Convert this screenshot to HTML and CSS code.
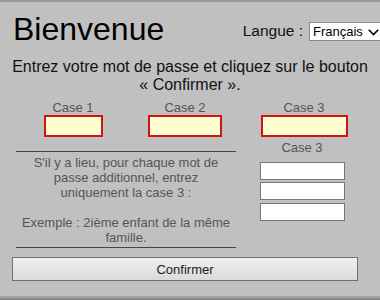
FILE: index.html
```html
<!DOCTYPE html>
<html lang="fr">
<head>
<meta charset="utf-8">
<title>Bienvenue</title>
<link rel="stylesheet" href="styles.css">
</head>
<body>
<div class="page">
  <header class="head">
    <h1 class="title">Bienvenue</h1>
    <div class="lang">
      <span class="lang-label">Langue :</span>
      <div class="select">
        <span class="select-text">Français</span>
        <svg class="chev" width="11" height="7" viewBox="0 0 11 7"><path d="M0.8 0.8 L5.5 5.6 L10.2 0.8" fill="none" stroke="#000" stroke-width="1.6"/></svg>
      </div>
    </div>
  </header>
  <p class="intro">Entrez votre mot de passe et cliquez sur le bouton<br>« Confirmer ».</p>
  <div class="cases">
    <div class="case"><span class="lbl">Case 1</span><span class="field req w1"></span></div>
    <div class="case"><span class="lbl">Case 2</span><span class="field req w2"></span></div>
    <div class="case"><span class="lbl">Case 3</span><span class="field req w3"></span></div>
  </div>
  <div class="extra">
    <div class="note">
      <p>S'il y a lieu, pour chaque mot de<br>passe additionnel, entrez<br>uniquement la case 3 :</p>
      <p class="ex">Exemple : 2ième enfant de la même<br>famille.</p>
    </div>
    <div class="more">
      <span class="lbl">Case 3</span>
      <span class="field plain first"></span>
      <span class="field plain second"></span>
      <span class="field plain third"></span>
    </div>
  </div>
  <button class="confirm" type="button">Confirmer</button>
</div>
<div class="bottom"></div>
</body>
</html>
```
FILE: styles.css
```css
html, body {
  margin: 0;
  padding: 0;
  overflow: hidden;
}
body {
  width: 380px;
  height: 300px;
  display: flex;
  flex-direction: column;
  background: #c0c0c0;
  font-family: "Liberation Sans", Arial, sans-serif;
}
.page {
  flex: 1;
  border-top: 2px solid #9a9a9a;
}
.head {
  display: flex;
  align-items: flex-start;
  padding: 9px 0 0 13px;
}
.title {
  margin: 0;
  font-size: 32px;
  line-height: 36px;
  font-weight: normal;
  color: #000;
}
.lang {
  margin-left: auto;
  margin-right: -4px;
  margin-top: 11px;
  display: flex;
  align-items: flex-start;
}
.lang-label {
  font-size: 15.5px;
  line-height: 17px;
  color: #111;
  margin-right: 6px;
}
.select {
  box-sizing: border-box;
  width: 75px;
  height: 19px;
  border: 1px solid #8a8a8a;
  background: #fff;
  display: flex;
  align-items: center;
  padding-left: 3px;
}
.select-text {
  font-size: 13px;
  color: #000;
  line-height: 15px;
}
.chev {
  margin-left: 5px;
  margin-top: 1px;
}
.intro {
  margin: 11px 0 0;
  font-size: 16px;
  line-height: 18px;
  text-align: center;
  color: #111;
}
.cases {
  display: grid;
  grid-template-columns: 114px 110px 128px;
  padding-left: 16px;
  margin-top: 6px;
}
.case {
  display: flex;
  flex-direction: column;
  align-items: center;
}
.lbl {
  font-size: 13px;
  line-height: 15px;
  color: #555;
}
.field {
  display: block;
  box-sizing: border-box;
}
.req {
  height: 22px;
  border: 2px solid #d01414;
  background: #ffffd2;
}
.w1 { width: 59px; }
.w2 { width: 74px; }
.w3 { width: 87px; }
.extra {
  display: grid;
  grid-template-columns: 220px 132px;
  padding-left: 16px;
  margin-top: 3px;
  align-items: start;
}
.note {
  margin-top: 11px;
  border-top: 1px solid #444;
  border-bottom: 1px solid #444;
  padding: 3px 0 2px;
  text-align: center;
  font-size: 13px;
  line-height: 15px;
  color: #555;
  white-space: nowrap;
}
.note p {
  margin: 0;
}
.note .ex {
  margin-top: 15px;
}
.more {
  display: flex;
  flex-direction: column;
  align-items: center;
}
.plain {
  width: 85px;
  height: 18px;
  border: 1px solid #777;
  background: #fff;
}
.first { margin-top: 7px; }
.second { margin-top: 2px; }
.third { margin-top: 3px; }
.confirm {
  display: block;
  box-sizing: border-box;
  margin: 9px 0 0 12px;
  width: 346px;
  height: 24px;
  border: 1px solid #707070;
  background: linear-gradient(#f0f0f0, #dadada);
  font-family: "Liberation Sans", Arial, sans-serif;
  font-size: 13px;
  color: #222;
  padding: 0;
}
.bottom {
  height: 4px;
  border-top: 2px solid #a6a6a6;
  background: #888;
  box-sizing: border-box;
}
```
